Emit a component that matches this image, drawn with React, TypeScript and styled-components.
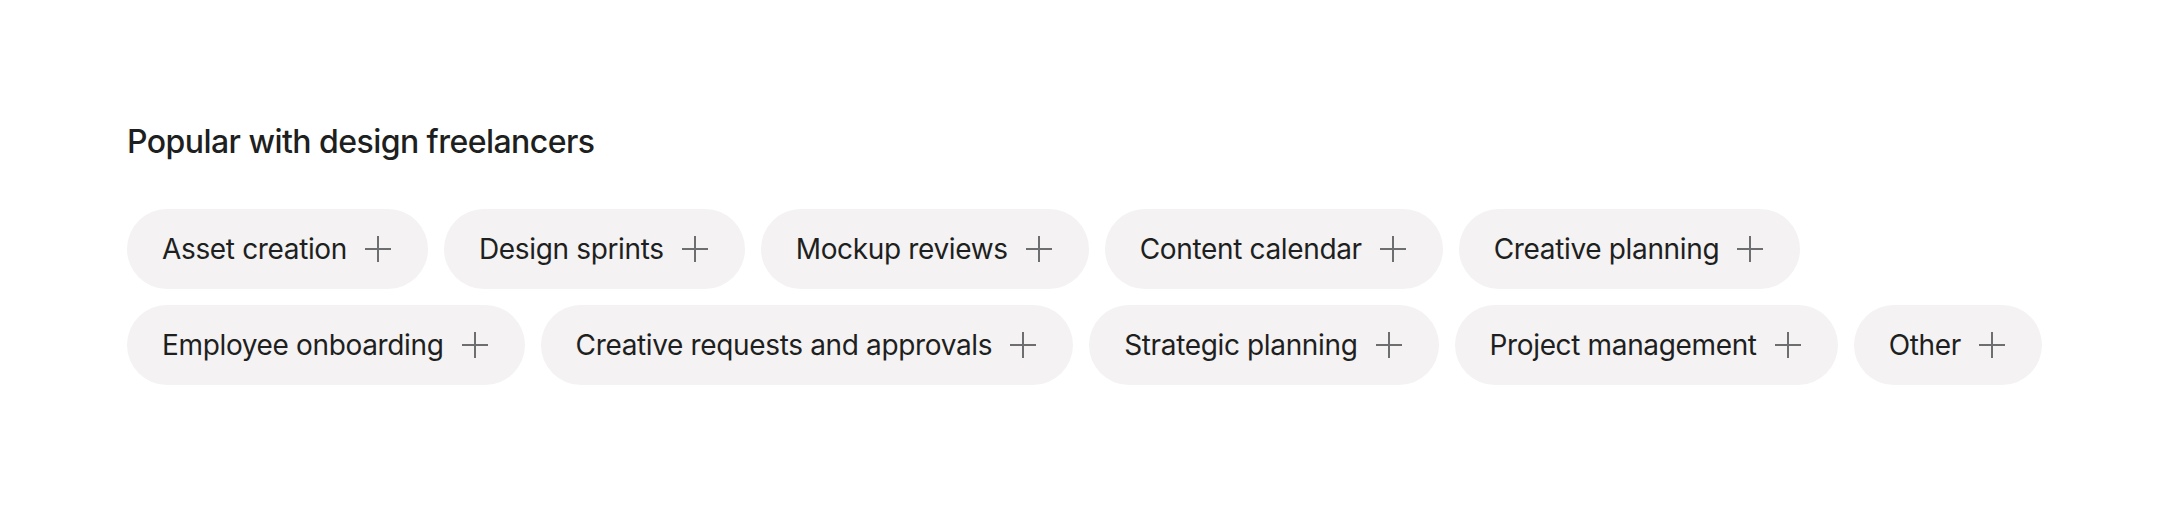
import React from 'react';
import styled, { createGlobalStyle } from 'styled-components';

const GlobalStyle = createGlobalStyle`
  html, body {
    margin: 0;
    padding: 0;
    background: #ffffff;
  }
  body {
    font-family: Inter, "Noto Sans", "Liberation Sans", sans-serif;
    color: #1e1f21;
    -webkit-font-smoothing: antialiased;
  }
`;

const useCases = [
  'Asset creation',
  'Design sprints',
  'Mockup reviews',
  'Content calendar',
  'Creative planning',
  'Employee onboarding',
  'Creative requests and approvals',
  'Strategic planning',
  'Project management',
  'Other',
];

const PlusIcon: React.FC = () => (
  <svg width="26" height="26" viewBox="0 0 26 26" aria-hidden="true">
    <path d="M13 0v26M0 13h26" stroke="currentColor" strokeWidth="2" fill="none" />
  </svg>
);

const App: React.FC = () => {
  return (
    <>
      <GlobalStyle />
      <Section>
        <Heading>Popular with design freelancers</Heading>
        <ChipList>
          {useCases.map((label) => (
            <Chip key={label} type="button">
              <ChipLabel>{label}</ChipLabel>
              <IconWrap>
                <PlusIcon />
              </IconWrap>
            </Chip>
          ))}
        </ChipList>
      </Section>
    </>
  );
};

const Section = styled.section`
  padding: 122px 60px 0 127px;
`;

const Heading = styled.h2`
  margin: 0 0 47px;
  font-size: 32px;
  line-height: 40px;
  font-weight: 500;
  letter-spacing: -0.55px;
  color: #1e1f21;
`;

const ChipList = styled.div`
  display: flex;
  flex-wrap: wrap;
  gap: 16px;
`;

const Chip = styled.button`
  display: flex;
  align-items: center;
  gap: 18px;
  height: 80px;
  padding: 0 37px 0 35px;
  border: none;
  border-radius: 40px;
  background: #f4f2f2;
  font-family: inherit;
  cursor: pointer;

  &:hover {
    background: #eae8e8;
  }
`;

const ChipLabel = styled.span`
  font-size: 28px;
  line-height: 34px;
  font-weight: 400;
  letter-spacing: -0.35px;
  color: #1e1f21;
  white-space: nowrap;
`;

const IconWrap = styled.span`
  display: flex;
  color: #6d6e6f;
`;

export default App;
